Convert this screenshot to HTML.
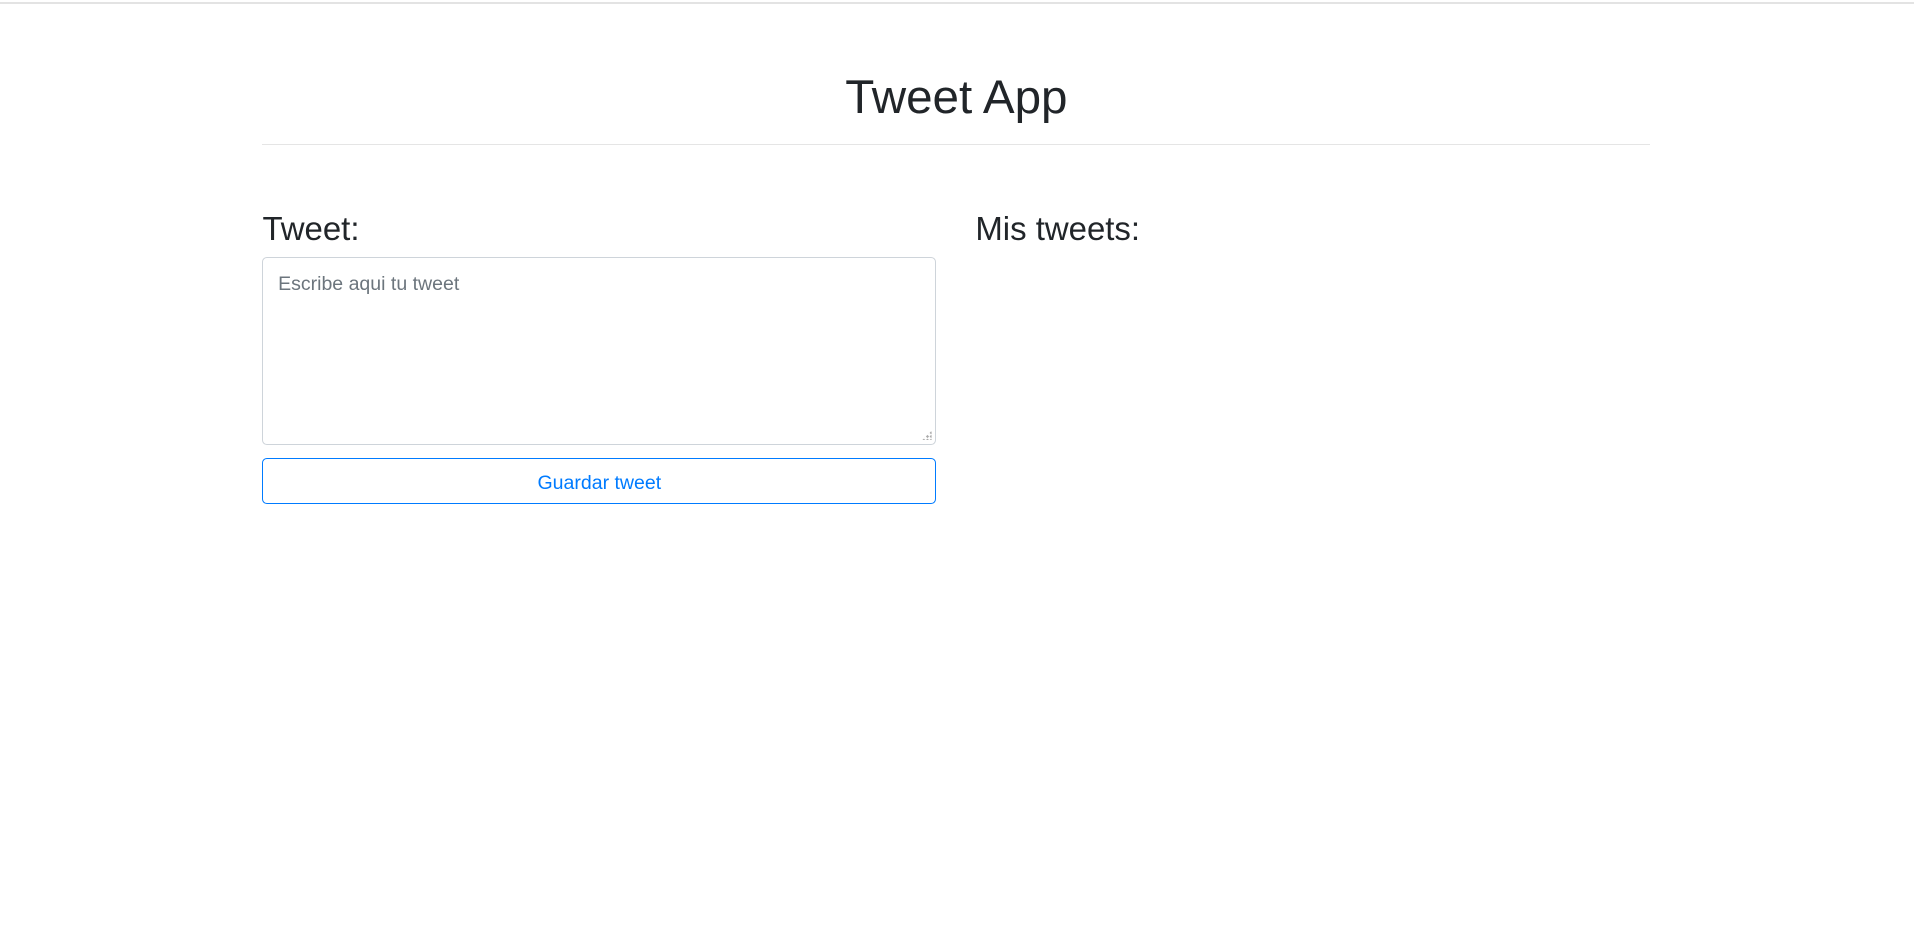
<!DOCTYPE html>
<html><head><meta charset="utf-8"><style>
html{zoom:1.2207}
body{margin:0;background:#fff;font-family:"Liberation Sans",sans-serif;color:#212529;width:1568px;height:770px;position:relative;overflow:hidden}
.top{position:absolute;left:0;top:2px;width:100%;height:1px;background:#e3e3e3}
h1{position:absolute;margin:0;left:215px;width:1137px;text-align:center;top:57px;font-size:39px;font-weight:400;line-height:46px}
.hr{position:absolute;left:215px;width:1137px;top:118px;height:1px;background:#e5e5e5}
h3{position:absolute;margin:0;top:171px;font-size:27px;font-weight:400;line-height:33px}
.ta{position:absolute;left:215px;top:210.5px;width:552px;height:154px;border:1px solid #ced4da;border-radius:4px;box-sizing:border-box}
.ph{position:absolute;left:12px;top:12px;font-size:16px;color:#6c757d}
.grip{position:absolute;right:3px;bottom:3px;width:8px;height:8px;background:
radial-gradient(circle,#aaa 45%,transparent 50%) 0 0/3px 3px;clip-path:polygon(100% 0,100% 100%,0 100%)}
.btn{position:absolute;left:215px;top:375px;width:552px;height:38px;border:1px solid #007bff;border-radius:4px;box-sizing:border-box;color:#007bff;font-size:16px;text-align:center;line-height:40px}
</style></head><body>
<div class="top"></div>
<h1>Tweet App</h1>
<div class="hr"></div>
<h3 style="left:215px">Tweet:</h3>
<h3 style="left:799px">Mis tweets:</h3>
<div class="ta"><div class="ph">Escribe aqui tu tweet</div><div class="grip"></div></div>
<div class="btn">Guardar tweet</div>
</body></html>
